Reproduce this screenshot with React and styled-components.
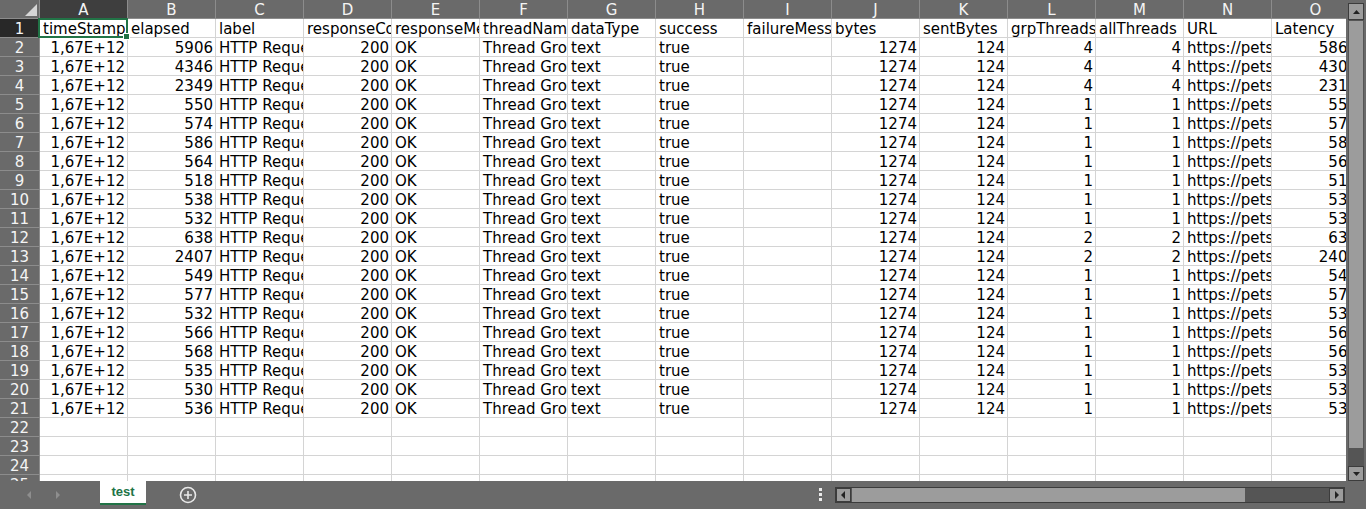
import styled, { createGlobalStyle } from "styled-components";

const GlobalStyle = createGlobalStyle`
  html, body {
    margin: 0;
    padding: 0;
    background: #6a6a6a;
    overflow: hidden;
  }
  * { box-sizing: border-box; }
`;

const COLUMNS = [
  { key: "A", title: "timeStamp", align: "right" },
  { key: "B", title: "elapsed", align: "right" },
  { key: "C", title: "label", align: "left" },
  { key: "D", title: "responseCode", align: "right" },
  { key: "E", title: "responseMessage", align: "left" },
  { key: "F", title: "threadName", align: "left" },
  { key: "G", title: "dataType", align: "left" },
  { key: "H", title: "success", align: "left" },
  { key: "I", title: "failureMessage", align: "left" },
  { key: "J", title: "bytes", align: "right" },
  { key: "K", title: "sentBytes", align: "right" },
  { key: "L", title: "grpThreads", align: "right" },
  { key: "M", title: "allThreads", align: "right" },
  { key: "N", title: "URL", align: "left" },
  { key: "O", title: "Latency", align: "right" },
];

const ELAPSED = [5906, 4346, 2349, 550, 574, 586, 564, 518, 538, 532, 638, 2407, 549, 577, 532, 566, 568, 535, 530, 536];
const LATENCY = [5862, 4301, 2310, 551, 572, 583, 560, 514, 534, 530, 634, 2403, 545, 573, 530, 561, 563, 531, 530, 532];
const THREADS = [4, 4, 4, 1, 1, 1, 1, 1, 1, 1, 2, 2, 1, 1, 1, 1, 1, 1, 1, 1];

const ROWS = ELAPSED.map((el, i) => [
  "1,67E+12",
  el,
  "HTTP Request",
  200,
  "OK",
  "Thread Group 1-1",
  "text",
  "true",
  "",
  1274,
  124,
  THREADS[i],
  THREADS[i],
  "https://petstore.swagger.io/v2/pet",
  LATENCY[i],
]);

const TOTAL_ROWS = 25;

const Window = styled.div`
  width: 1366px;
  height: 509px;
  display: flex;
  flex-direction: column;
  background: #6a6a6a;
  font-family: "DejaVu Sans", Verdana, sans-serif;
`;

const Main = styled.div`
  display: flex;
  height: 481px;
`;

const Viewport = styled.div`
  width: 1346px;
  height: 481px;
  overflow: hidden;
  background: #fff;
`;

const Grid = styled.div`
  display: grid;
  grid-template-columns: 40px repeat(15, 88px);
  grid-auto-rows: 19px;
  width: max-content;
`;

const Corner = styled.div`
  background: #6a6a6a;
  border-right: 1px solid #8c8c8c;
  border-bottom: 1px solid #8c8c8c;
  display: flex;
  align-items: flex-end;
  justify-content: flex-end;
  padding: 0 2px 2px 0;
`;

const CornerMark = styled.div`
  width: 12px;
  height: 12px;
  background: #d6d6d6;
  clip-path: polygon(100% 0, 100% 100%, 0 100%);
`;

const ColHeader = styled.div`
  background: ${({ $active }) => ($active ? "#3e3e3e" : "#6a6a6a")};
  color: #f4f4f4;
  border-right: 1px solid #8c8c8c;
  border-bottom: 1px solid #8c8c8c;
  text-align: center;
  font-size: 15px;
  line-height: 16px;
  padding-top: 2px;
`;

const RowHeader = styled.div`
  background: ${({ $active }) => ($active ? "#282828" : "#6a6a6a")};
  color: #f4f4f4;
  border-right: 1px solid #8c8c8c;
  border-bottom: 1px solid #8c8c8c;
  text-align: center;
  font-size: 15px;
  line-height: 16px;
  padding-top: 2px;
`;

const Cell = styled.div`
  position: relative;
  border-right: 1px solid #d4d4d4;
  border-bottom: 1px solid #d4d4d4;
  color: #000;
  font-size: 15px;
  line-height: 16px;
  padding: 2px 2px 0 3px;
  text-align: ${({ $align }) => $align};
  white-space: nowrap;
  overflow: ${({ $active }) => ($active ? "visible" : "hidden")};
  z-index: ${({ $active }) => ($active ? 2 : 0)};

  ${({ $active }) =>
    $active &&
    `
    &::after {
      content: "";
      position: absolute;
      left: -2px;
      top: -1px;
      right: -1px;
      bottom: -1px;
      border: 2px solid #217346;
      pointer-events: none;
    }
    &::before {
      content: "";
      position: absolute;
      right: -3px;
      bottom: -3px;
      width: 5px;
      height: 5px;
      background: #217346;
      border: 1px solid #fff;
      z-index: 3;
    }
  `}
`;

const ActiveText = styled.span`
  display: block;
  overflow: hidden;
`;

const VScroll = styled.div`
  width: 20px;
  height: 481px;
  display: flex;
  flex-direction: column;
  padding: 3px 2px 0 2px;
`;

const VTrack = styled.div`
  flex: 1;
  display: flex;
  flex-direction: column;
  background: #555;
`;

const ArrowButton = styled.div`
  width: ${({ $w }) => $w}px;
  height: ${({ $h }) => $h}px;
  flex-shrink: 0;
  background: #9c9c9c;
  border: 1px solid #3c3c3c;
  display: flex;
  align-items: center;
  justify-content: center;
`;

const VThumb = styled.div`
  height: 427px;
  margin: 1px 1px 0 1px;
  background: #9c9c9c;
`;

const Spacer = styled.div`
  flex: 1;
`;

const BottomBar = styled.div`
  height: 28px;
  display: flex;
  align-items: flex-start;
`;

const NavGroup = styled.div`
  width: 100px;
  height: 28px;
  display: flex;
  align-items: center;
  gap: 21px;
  padding-left: 26px;
`;

const Tab = styled.div`
  width: 46px;
  height: 24px;
  background: #fff;
  border-bottom: 2px solid #217346;
  color: #217346;
  font-family: "Liberation Sans", Arial, sans-serif;
  font-weight: bold;
  font-size: 13px;
  line-height: 22px;
  text-align: center;
`;

const AddSheet = styled.div`
  width: 18px;
  height: 28px;
  margin-left: 33px;
  display: flex;
  align-items: center;
`;

const Dots = styled.div`
  margin-left: 622px;
  height: 28px;
  width: 4px;
  display: flex;
  flex-direction: column;
  justify-content: center;
  gap: 2px;
  padding-bottom: 2px;
`;

const Dot = styled.div`
  width: 3px;
  height: 3px;
  background: #eaeaea;
`;

const HScroll = styled.div`
  margin-left: 12px;
  margin-top: 6px;
  width: 510px;
  height: 16px;
  display: flex;
  background: #555;
  border: 1px solid #3c3c3c;
`;

const HThumb = styled.div`
  width: 393px;
  margin: 0 0 0 1px;
  background: #9c9c9c;
`;

const Arrow = ({ dir, color = "#222", size = 7 }) => {
  const pts = {
    up: "0,6 3.5,2 7,6",
    down: "0,2 3.5,6 7,2",
    left: "5,0 5,8 1,4",
    right: "2,0 2,8 6,4",
  }[dir];
  return (
    <svg width={size} height={8} viewBox="0 0 7 8">
      <polygon points={pts} fill={color} />
    </svg>
  );
};

const PlusCircle = () => (
  <svg width="18" height="18" viewBox="0 0 18 18">
    <circle cx="9" cy="9" r="7.5" fill="none" stroke="#e8e8e8" strokeWidth="1.6" />
    <path d="M9 5v8M5 9h8" stroke="#e8e8e8" strokeWidth="1.6" />
  </svg>
);

function Sheet() {
  const rows = [];
  for (let r = 1; r <= TOTAL_ROWS; r++) {
    const data = r === 1 ? COLUMNS.map((c) => c.title) : ROWS[r - 2] || [];
    rows.push(
      <RowHeader key={`h${r}`} $active={r === 1}>
        {r}
      </RowHeader>
    );
    COLUMNS.forEach((col, ci) => {
      const active = r === 1 && ci === 0;
      const value = data[ci] ?? "";
      rows.push(
        <Cell key={`${r}-${col.key}`} $align={r === 1 ? "left" : col.align} $active={active}>
          {active ? <ActiveText>{value}</ActiveText> : value}
        </Cell>
      );
    });
  }

  return (
    <Grid>
      <Corner>
        <CornerMark />
      </Corner>
      {COLUMNS.map((c, i) => (
        <ColHeader key={c.key} $active={i === 0}>
          {c.key}
        </ColHeader>
      ))}
      {rows}
    </Grid>
  );
}

export default function App() {
  return (
    <>
      <GlobalStyle />
      <Window>
        <Main>
          <Viewport>
            <Sheet />
          </Viewport>
          <VScroll>
            <VTrack>
              <ArrowButton $w={16} $h={17}>
                <Arrow dir="up" />
              </ArrowButton>
              <VThumb />
              <Spacer />
              <ArrowButton $w={16} $h={15}>
                <Arrow dir="down" />
              </ArrowButton>
            </VTrack>
          </VScroll>
        </Main>
        <BottomBar>
          <NavGroup>
            <Arrow dir="left" color="#8e8e8e" />
            <Arrow dir="right" color="#8e8e8e" />
          </NavGroup>
          <Tab>test</Tab>
          <AddSheet>
            <PlusCircle />
          </AddSheet>
          <Dots>
            <Dot />
            <Dot />
            <Dot />
          </Dots>
          <HScroll>
            <ArrowButton $w={15} $h={14}>
              <Arrow dir="left" />
            </ArrowButton>
            <HThumb />
            <Spacer />
            <ArrowButton $w={15} $h={14}>
              <Arrow dir="right" />
            </ArrowButton>
          </HScroll>
        </BottomBar>
      </Window>
    </>
  );
}
